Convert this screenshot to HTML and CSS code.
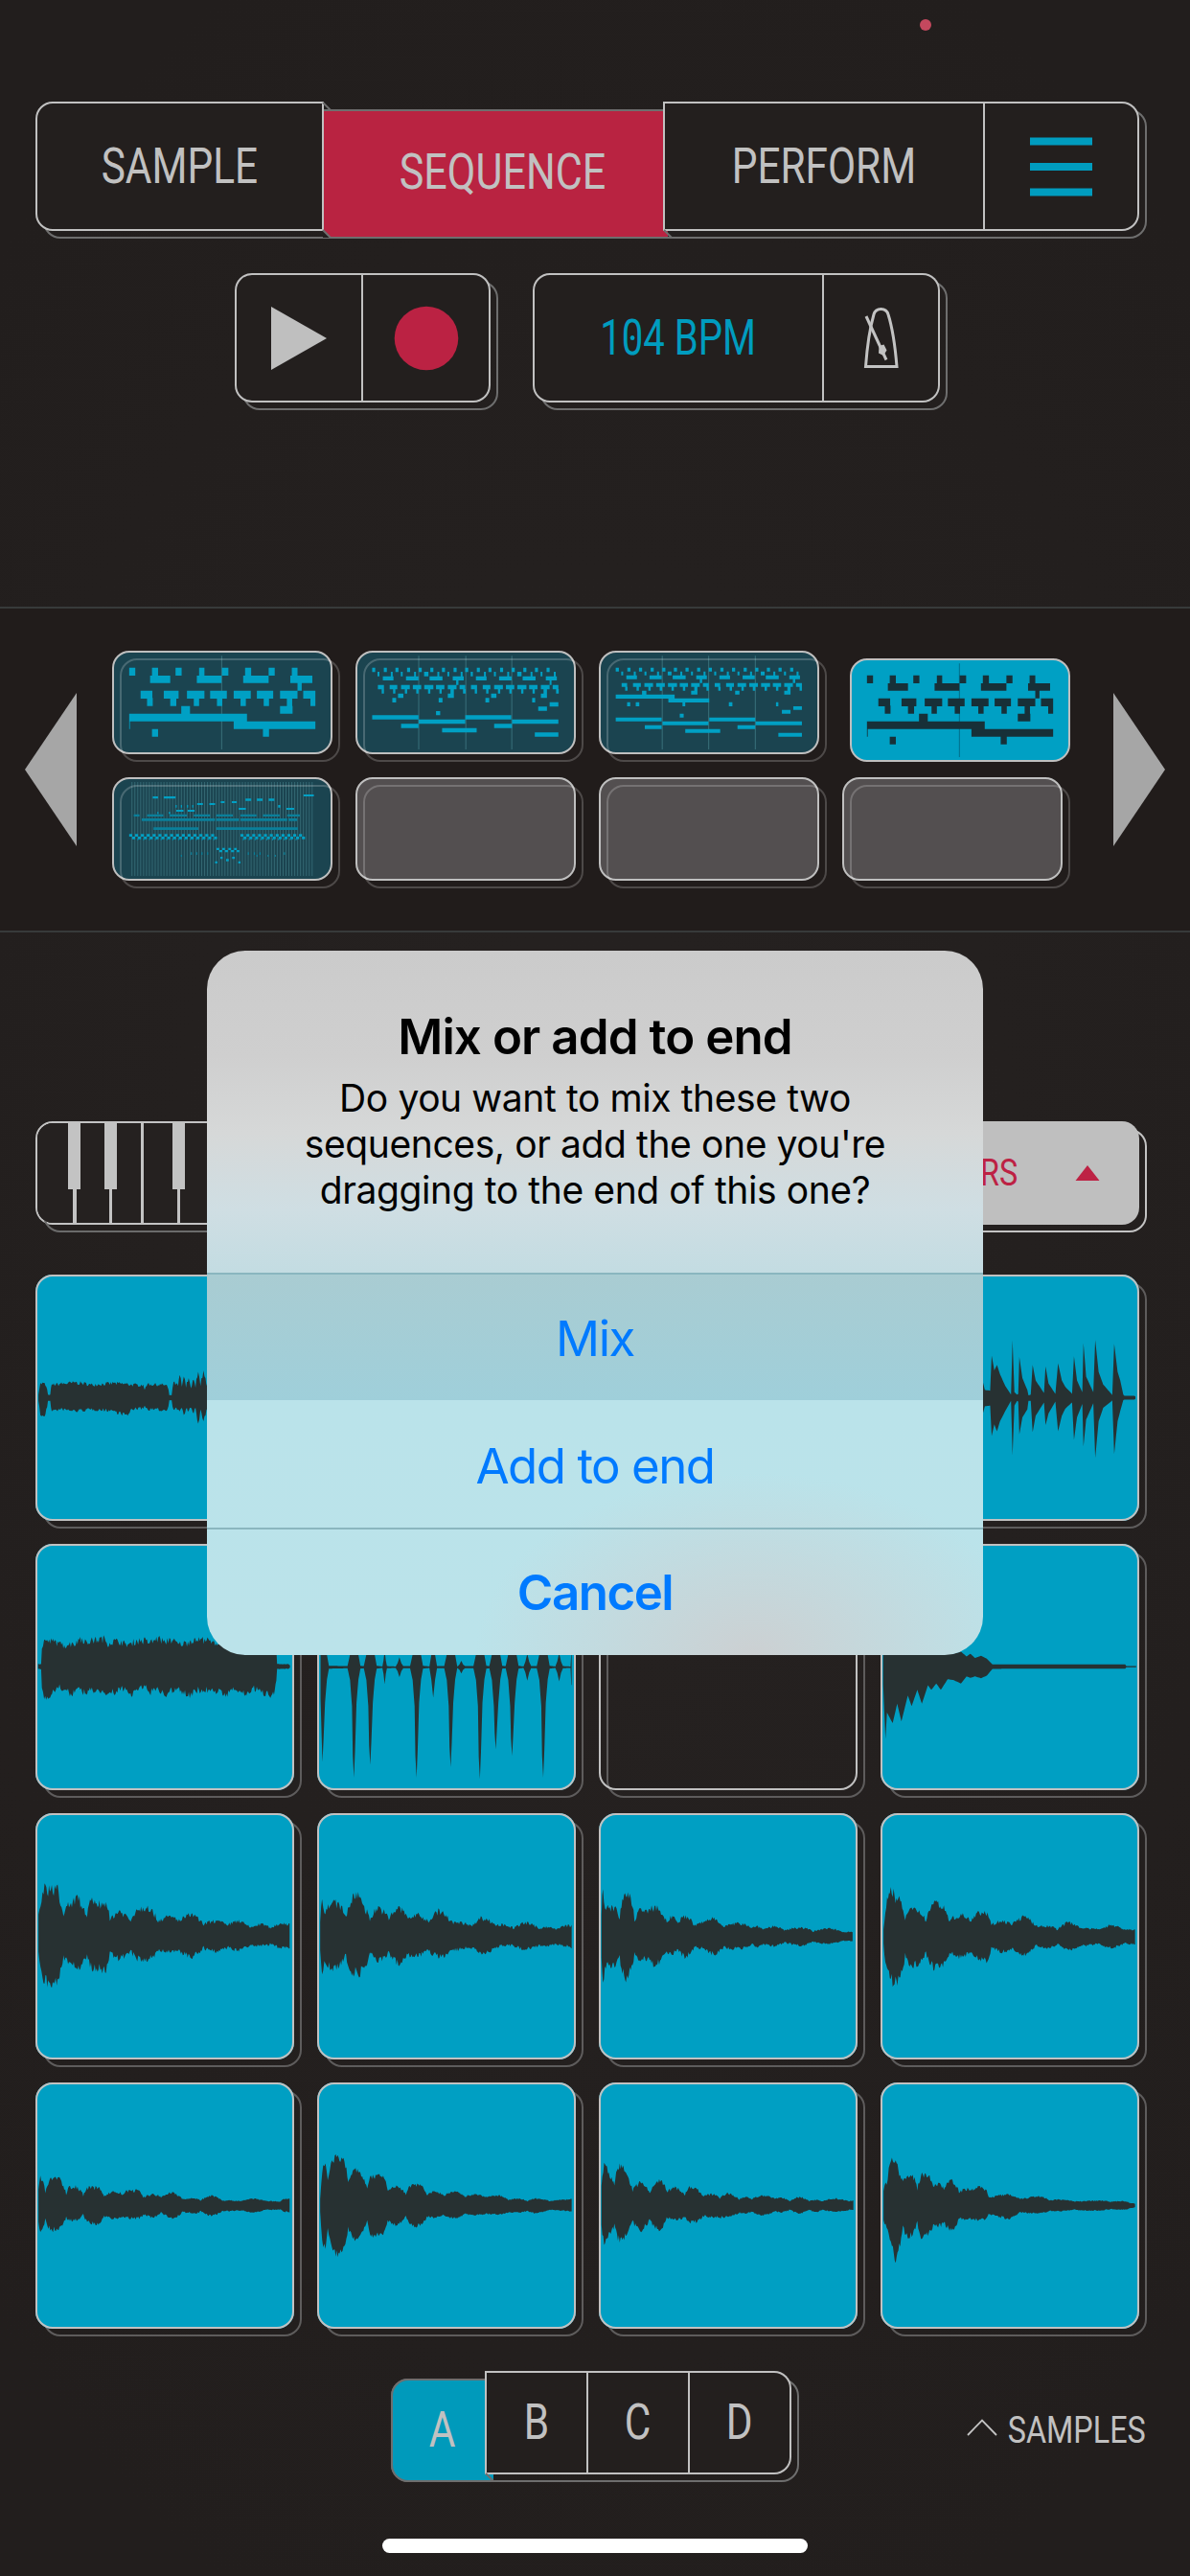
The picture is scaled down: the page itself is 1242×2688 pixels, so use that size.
FILE: index.html
```html
<!DOCTYPE html>
<html lang="en">
<head>
<meta charset="utf-8">
<title>Sequencer</title>
<link rel="stylesheet" href="styles.css">
</head>
<body>
<main class="screen">
  <span class="mic-dot"></span>

  <nav class="bar tabs">
    <div class="cell tab-sample"><span class="label">SAMPLE</span></div>
    <div class="cell tab-sequence sunk"><span class="label">SEQUENCE</span></div>
    <div class="cell tab-perform"><span class="label">PERFORM</span></div>
    <div class="cell tab-menu">
      <svg width="65" height="62" viewBox="0 0 65 62"><path d="M0 4.500h65M0 31h65M0 57.500h65" stroke="#009cbf" stroke-width="8"/></svg>
    </div>
    <svg class="joints" width="380" height="150" viewBox="0 0 380 150"><path d="M300 1l8 8" /><path d="M300 134l8 8H300z" class="gap"/><path d="M300 134l8 8M656 134l8 8"/></svg>
  </nav>

  <section class="transport">
    <div class="bar">
      <div class="cell play"><svg width="60" height="68" viewBox="0 0 60 68"><path d="M1 1L59 34L1 67z" fill="#bfbfbf"/></svg></div>
      <div class="cell record"><svg width="68" height="68" viewBox="0 0 68 68"><circle cx="34" cy="34" r="33.300" fill="#bb2243"/></svg></div>
    </div>
    <div class="bar">
      <div class="cell bpm"><span class="label">1<span class="zero">0</span>4 BPM</span></div>
      <div class="cell metronome">
        <svg width="38" height="66" viewBox="0 0 38 66" fill="none" stroke="#c3c3c3" stroke-width="3">
          <path d="M2.500 62.500C4 42 7 22 11 8C13 0.500 24 0.500 26 8C31 24 33.500 44 35 62.500z"/>
          <path d="M3 10L24 55.500" /><path d="M16.500 41l5-1.500l3 6l-3.500 5.500l-5-2.500z" fill="#c3c3c3" stroke="none"/>
        </svg>
      </div>
    </div>
  </section>

  <section class="sequences">
    <svg class="arrow prev" width="54" height="160" viewBox="0 0 54 160"><path d="M54 0V160L0 80z"/></svg>
    <div class="slots">
      <div class="slot filled"><svg class="notes" data-notes="a" viewBox="296 177 580 324" preserveAspectRatio="none"></svg></div>
      <div class="slot filled"><svg class="notes" data-notes="b" viewBox="938 177 580 324" preserveAspectRatio="none"></svg></div>
      <div class="slot filled"><svg class="notes" data-notes="c" viewBox="62 177 561 324" preserveAspectRatio="none"></svg></div>
      <div class="slot selected"><svg class="notes" data-notes="a" viewBox="296 177 580 324" preserveAspectRatio="none"></svg></div>
      <div class="slot filled"><svg class="notes" data-notes="d" viewBox="296 573 580 324" preserveAspectRatio="none"></svg></div>
      <div class="slot"></div>
      <div class="slot"></div>
      <div class="slot"></div>
    </div>
    <svg class="arrow next" width="54" height="160" viewBox="0 0 54 160"><path d="M0 0V160L54 80z"/></svg>
  </section>

  <section class="modes">
    <div class="keyboard">
      <svg width="240" height="104" viewBox="0 0 240 104" fill="#c3c3c3">
        <path d="M32 0h13v69h-4v35h-4v-35h-5zM70 0h13v69h-5v35h-3v-35h-5zM108 0h3v104h-3zM141 0h13v69h-5v35h-3v-35h-5z"/>
      </svg>
    </div>
    <div class="filters">
      <span class="label small">RS</span>
      <svg width="26" height="16" viewBox="0 0 26 16"><path d="M13 0L25.500 16H0.500z" fill="#bd2244"/></svg>
    </div>
  </section>

  <section class="pads">
    <div class="pad"><svg class="wave" data-wave="r1c1" viewBox="94 905 682 630" preserveAspectRatio="none"></svg></div>
    <div class="pad"></div>
    <div class="pad"></div>
    <div class="pad"><svg class="wave" data-wave="r1c4" viewBox="753 905 682 630" preserveAspectRatio="none"></svg></div>
    <div class="pad"><svg class="wave" data-wave="r2c1" viewBox="94 57 682 695" preserveAspectRatio="none"></svg></div>
    <div class="pad"><svg class="wave" data-wave="r2c2" viewBox="836 57 682 695" preserveAspectRatio="none"></svg></div>
    <div class="pad empty"></div>
    <div class="pad"><svg class="wave" data-wave="r2c4" viewBox="753 57 682 695" preserveAspectRatio="none"></svg></div>
    <div class="pad"><svg class="wave" data-wave="r3c1" viewBox="94 816 682 695" preserveAspectRatio="none"></svg></div>
    <div class="pad"><svg class="wave" data-wave="r3c2" viewBox="836 816 682 695" preserveAspectRatio="none"></svg></div>
    <div class="pad"><svg class="wave" data-wave="r3c3" viewBox="11 816 682 695" preserveAspectRatio="none"></svg></div>
    <div class="pad"><svg class="wave" data-wave="r3c4" viewBox="753 816 682 695" preserveAspectRatio="none"></svg></div>
    <div class="pad"><svg class="wave" data-wave="r4c1" viewBox="94 39 682 763" preserveAspectRatio="none"></svg></div>
    <div class="pad"><svg class="wave" data-wave="r4c2" viewBox="836 39 682 763" preserveAspectRatio="none"></svg></div>
    <div class="pad"><svg class="wave" data-wave="r4c3" viewBox="11 39 682 763" preserveAspectRatio="none"></svg></div>
    <div class="pad"><svg class="wave" data-wave="r4c4" viewBox="753 39 682 763" preserveAspectRatio="none"></svg></div>
  </section>

  <footer class="footer">
    <div class="bar banks">
      <div class="cell bank-a sunk"><span class="label">A</span></div>
      <div class="cell bank-b"><span class="label">B</span></div>
      <div class="cell bank"><span class="label">C</span></div>
      <div class="cell bank"><span class="label">D</span></div>
      <svg class="joints" width="130" height="120" viewBox="0 0 130 120"><path d="M107 107l8 8"/></svg>
    </div>
    <div class="samples">
      <svg width="32" height="18" viewBox="0 0 32 18"><path d="M1 17L16 1.500L31 17" fill="none" stroke="#c3c3c3" stroke-width="1.800"/></svg>
      <span class="label small">SAMPLES</span>
    </div>
  </footer>
  <div class="home-bar"></div>

  <div class="alert">
    <div class="alert-text">
      <h1>Mix or add to end</h1>
      <p>Do you want to mix these two<br>sequences, or add the one you're<br>dragging to the end of this one?</p>
    </div>
    <div class="action pressed"><span>Mix</span></div>
    <div class="action"><span>Add to end</span></div>
    <div class="action cancel"><span>Cancel</span></div>
  </div>
</main>
<script src="script.js"></script>
</body>
</html>
```
FILE: styles.css
```css
* { box-sizing: border-box; }

body {
  margin: 0;
  background: #231f1e;
  font-family: Roboto, "Liberation Sans", sans-serif;
}

svg { display: block; }

.screen {
  position: relative;
  width: 1242px;
  height: 2688px;
  padding-top: 106px;
  overflow: hidden;
  display: flex;
  flex-direction: column;
  background: radial-gradient(ellipse 900px 1500px at 50% 50%, #262221, #221e1d);
}

.mic-dot {
  position: absolute;
  left: 960px;
  top: 20px;
  width: 12px;
  height: 12px;
  border-radius: 50%;
  background: #c4485e;
}

.label {
  display: block;
  font-size: 51px;
  line-height: 60px;
  color: #c1c1c1;
  white-space: nowrap;
  transform: scaleX(.83);
}

.label.small { font-size: 39px; line-height: 46px; }

/* Outlined groups with an offset second outline behind */
.bar {
  position: relative;
  isolation: isolate;
  display: flex;
  height: 135px;
}

.bar::before {
  content: "";
  position: absolute;
  z-index: -1;
  inset: 8px -8px -8px 8px;
  border: 2px solid #6e6e6e;
  border-radius: 18px;
}

.cell {
  display: flex;
  align-items: center;
  justify-content: center;
  height: 100%;
  background: #231f1e;
  border: 2px solid #c1c1c1;
  border-left: 0;
}

.cell:first-child { border-left: 2px solid #c1c1c1; border-radius: 18px 0 0 18px; }
.cell:nth-last-child(1 of .cell) { border-radius: 0 18px 18px 0; }

.joints {
  position: absolute;
  left: 0;
  top: 0;
  overflow: visible;
  fill: none;
  stroke: #6e6e6e;
  stroke-width: 2;
}

.joints .gap { fill: #231f1e; stroke: none; }

.tabs { width: 1152px; margin-left: 37px; }
.tab-sample { width: 301px; }
.tab-sequence { width: 354px; }
.tab-perform { width: 336px; border-left: 2px solid #c1c1c1; }
.tab-menu { width: 161px; }

.cell.sunk { position: relative; z-index: -1; margin-top: 8px; }
.cell.tab-sequence {
  margin-right: -5px;
  width: 359px;
  padding: 0 0 4px 13px;
  background: #b92341;
  border-color: #6e6e6e;
  border-width: 2px 0;
}
.tab-sequence .label { transform: scaleX(.845); }

.transport { display: flex; gap: 44px; margin: 44px 0 0 245px; }
.play { width: 134px; }
.record { width: 133px; }
.bpm { width: 304px; }
.bpm .label { color: #009cbf; transform: scaleX(.785); }
.zero { position: relative; }
.zero::after {
  content: "";
  position: absolute;
  left: 50%;
  top: 50%;
  width: 6px;
  height: 5px;
  margin: -2px 0 0 -3px;
  border-radius: 50%;
  background: #009cbf;
}
.metronome { width: 121px; padding-left: 1px; }

.sequences {
  display: flex;
  align-items: flex-start;
  height: 340px;
  margin-top: 213px;
  padding: 44px 26px 0;
  border: solid #373a3a;
  border-width: 2px 0;
  background: #211c1b;
}

.arrow { margin-top: 44px; fill: #a6a6a6; }
.prev { margin-right: 37px; }
.next { margin-left: 53px; }

.slots {
  display: grid;
  grid-template-columns: repeat(4, 230px);
  grid-auto-rows: 108px;
  gap: 24px;
}

.slot {
  position: relative;
  border: 2px solid #bfbfbf;
  border-radius: 18px;
  background: #534f50;
}

.slot::after {
  content: "";
  position: absolute;
  inset: 6px -10px -10px 6px;
  border: 2px solid rgba(255, 255, 255, .2);
  border-radius: 18px;
}

.filled { background: #1b4450; }
.selected { background: #00a0c4; margin: 8px -8px -8px 8px; }
.selected::after { display: none; }

.notes { width: 230px; height: 108px; margin: -2px; fill: #00a0c4; }
.selected .notes { fill: #173038; }
.notes .grid { fill: rgba(120, 200, 210, .28); }
.selected .notes .grid { fill: rgba(0, 40, 60, .35); }
.notes .soft { fill: #0a7f9a; }

.modes { display: flex; height: 108px; margin: 197px 53px 0 37px; }

.keyboard, .filters { position: relative; isolation: isolate; width: 576px; }
.keyboard {
  border: 2px solid #c3c3c3;
  border-radius: 18px 0 0 18px;
}
.keyboard::before, .filters::before {
  content: "";
  position: absolute;
  z-index: -1;
  inset: 8px -8px -8px 8px;
  border: 2px solid #c3c3c3;
  border-radius: 18px;
}
.keyboard::before { inset: 6px 0 -10px 6px; border-color: #6b6b6b; z-index: -2; }
.keyboard::after {
  content: "";
  position: absolute;
  inset: 0;
  z-index: -1;
  border-radius: 16px;
  background: #252120;
}

.filters {
  display: flex;
  align-items: center;
  justify-content: flex-end;
  padding-right: 41px;
}
.filters::after {
  content: "";
  position: absolute;
  inset: 0;
  z-index: -1;
  border-radius: 0 18px 18px 0;
  background: #bfbfbf;
}
.filters .label { color: #bd2244; margin-right: 56px; }

.pads {
  display: grid;
  grid-template-columns: repeat(4, 270px);
  grid-auto-rows: 257px;
  gap: 24px;
  margin: 52px 0 0 37px;
}

.pad { position: relative; }
.pad::before {
  content: "";
  position: absolute;
  inset: 8px -8px -8px 8px;
  border: 2px solid #5e5c5c;
  border-radius: 18px;
}
.pad::after {
  content: "";
  position: absolute;
  inset: 0;
  border: 2px solid #c1c1c1;
  border-radius: 18px;
}
.wave {
  position: relative;
  width: 270px;
  height: 257px;
  border-radius: 18px;
  background: #009fc3;
  fill: #273132;
}

.footer { position: relative; display: flex; justify-content: space-between; height: 108px; margin: 44px 45px 0 400px; }
.banks { height: 108px; width: 426px; }
.cell.bank-a {
  width: 107px;
  margin: 8px -9px 0 8px;
  padding-right: 1px;
  border: 2px solid #6e6e6e;
  border-right: 0;
  background: #009abb;
}
.bank-b { width: 108px; border-left: 2px solid #c1c1c1; }
.bank { width: 106px; }

.samples { display: flex; align-items: center; padding-top: 16px; }
.samples svg { margin: -6px -3px 0 3px; }
.samples .label { margin: 0 -14px 0 -1px; }

.home-bar { width: 444px; height: 15px; margin: 67px 0 0 399px; border-radius: 8px; background: #fff; }

/* Alert laid over the screen */
.alert {
  position: absolute;
  left: 216px;
  top: 992px;
  width: 810px;
  height: 735px;
  overflow: hidden;
  border-radius: 40px;
  font-family: Inter, "Liberation Sans", sans-serif;
  text-align: center;
  color: #000;
  background:
    radial-gradient(ellipse 290px 190px at 570px 735px, rgba(204, 208, 210, 1), rgba(190, 224, 230, 0)),
    linear-gradient(#cbcbcb, #cfcfcf 110px, #d6d8d8 190px, #cfdee3 270px, #c3dce2 336px, #bae3ea 470px, #bbe3ea);
}

.alert-text { height: 336px; padding-top: 59px; }
.alert h1 { margin: 0; font-size: 51px; line-height: 62px; font-weight: 600; letter-spacing: -.9px; }
.alert p { margin: 9px 0 0; font-size: 39px; line-height: 48px; letter-spacing: -.4px; }

.action {
  height: 133px;
  border-top: 2px solid #8ab6bf;
  font-size: 51px;
  line-height: 133px;
  letter-spacing: -1.5px;
  color: #007aff;
}
.action.pressed { background: linear-gradient(#a9ccd2, #9fcfda); }
.action.pressed + .action { border-top-color: transparent; }
.cancel { font-weight: 600; line-height: 132px; }
```
FILE: script.js
```js
// Piano-roll thumbnails: rows of [top, height, from, to, from, to, ...]
const repeat = (start, step, count, width) => {
  const out = [];
  for (let i = 0; i < count; i++) out.push(start + i * step, start + i * step + width);
  return out;
};

const shift = (list, by) => list.concat(list.map(v => v + by));

const noteSets = {
  a: {
    grid: [[193, 293, 583, 586]],
    notes: [
      [230, 25, 341, 357, 401, 417, 463, 479, 525, 539, 585, 602, 646, 662, 708, 724, 769, 784],
      [255, 23, 396, 449, 519, 584, 641, 708, 765, 823],
      [278, 24, 784, 795],
      [302, 25, 371, 402, 432, 471, 493, 539, 554, 598, 616, 661, 677, 720, 738, 784, 799, 831],
      [325, 25, 388, 403, 449, 465, 511, 525, 572, 586, 634, 648, 695, 709, 756, 770, 818, 831],
      [350, 24, 478, 501, 738, 771],
      [374, 24, 341, 651],
      [398, 24, 616, 831, 341, 343],
      [422, 24, 401, 417, 693, 709]
    ]
  },
  b: {
    grid: [[193, 293, 1103, 1106, 1227, 1230, 1348, 1351]],
    notes: [
      [230, 14, ...repeat(982, 30.6, 16, 8)],
      [243, 14, ...repeat(996, 61.3, 8, 5), ...repeat(1031, 61.3, 8, 5), 1119, 1130, 1242, 1247, 1364, 1375],
      [257, 13, ...shift([1010, 1038, 1071, 1104, 1133, 1167, 1194, 1223], 245)],
      [270, 14, 1203, 1209, 1449, 1454],
      [284, 14, ...shift([997, 1013, 1028, 1048, 1058, 1081, 1089, 1111, 1119, 1143, 1150, 1172, 1181, 1204, 1212, 1227], 245)],
      [297, 14, ...shift([1007, 1013, 1037, 1043, 1068, 1074, 1098, 1104, 1129, 1135, 1159, 1165, 1188, 1197, 1221, 1228], 245)],
      [311, 14, ...shift([1050, 1064, 1181, 1197], 245)],
      [325, 14, 1035, 1045, 1157, 1167, 1280, 1290, 1403, 1411],
      [338, 14, 1449, 1472], [352, 13, 1419, 1442], [366, 13, 1150, 1161],
      [379, 13, 982, 1104, 1227, 1348], [392, 14, 1104, 1227, 1350, 1472],
      [406, 13, 1058, 1104, 1303, 1350], [419, 14, 1166, 1257], [433, 13, 1410, 1472]
    ]
  },
  c: {
    grid: [[193, 293, 222, 225, 340, 343, 459, 462]],
    notes: [
      [230, 12, ...repeat(105, 29.6, 16, 8)],
      [242, 12, ...repeat(119, 59.2, 8, 5), ...repeat(151, 59.2, 8, 5), 238, 247, 475, 484],
      [254, 12, ...shift([132, 159, 191, 222, 250, 283, 310, 337], 237)],
      [266, 12, 319, 325, 556, 562],
      [278, 12, ...shift([120, 134, 149, 169, 178, 200, 208, 230, 238, 261, 268, 289, 297, 319, 327, 342], 237)],
      [290, 12, ...shift([129, 135, 158, 164, 188, 194, 217, 223, 247, 253, 276, 282, 305, 313, 336, 342], 237)],
      [302, 12, 172, 183, 297, 313, 409, 420, 534, 550],
      [314, 13, 105, 255], [326, 13, 239, 343],
      [338, 13, 134, 142, 156, 165, 275, 282, 393, 402, 513, 519],
      [351, 11, 557, 579], [362, 12, 528, 550], [374, 12, 268, 278],
      [386, 12, 105, 222, 343, 460], [398, 12, 224, 341, 461, 579],
      [410, 12, 179, 222, 415, 460], [422, 12, 282, 371], [434, 12, 519, 579]
    ]
  },
  d: {
    grid: [[588, 294, ...repeat(347, 7.65, 63, 2.500)]],
    soft: [
      [689, 7, 353, 368, 388, 431, 447, 493, 511, 554, 570, 614, 634, 676, 693, 737, 757, 790],
      [702, 8, 374, 567, 570, 630, 634, 757, 760, 783],
      [730, 8, 405, 523, 570, 785],
      [765, 6, ...repeat(362, 15.4, 14, 3), ...repeat(640, 15.4, 10, 3)],
      [808, 8, 503, 506, 517, 520, 531, 534, 546, 549, 653, 656, 669, 672, 684, 687, 748, 751],
      [816, 6, 477, 480, 676, 679, 705, 708, 724, 727]
    ],
    notes: [
      [633, 7, 403, 417, 432, 463], [654, 6, 520, 535, 552, 567], [675, 6, 465, 484, 495, 513],
      [648, 6, 582, 592, 611, 624], [640, 7, 647, 662, 677, 692, 708, 723],
      [669, 6, 629, 648, 755, 775], [627, 6, 800, 827],
      [660, 8, 463, 466, 477, 480, 493, 496, 507, 510, 733, 739],
      [682, 6, 415, 418, 445, 449],
      [751, 8, ...repeat(341, 15.4, 15, 8), ...repeat(634, 15.4, 11, 8)],
      [759, 8, ...repeat(348.700, 15.4, 15, 8), ...repeat(641.700, 15.4, 11, 8)],
      [794, 7, 571, 578, 586, 593, 602, 609, 617, 624],
      [801, 7, 578, 586, 593, 601, 609, 617, 624, 631],
      [822, 7, 581, 587, 612, 619], [829, 7, 596, 603], [836, 7, 567, 573, 628, 634]
    ]
  }
};

const rowsToPath = rows => rows.map(([y, h, ...xs]) => {
  let d = "";
  for (let i = 0; i < xs.length; i += 2) d += `M${xs[i]} ${y}H${xs[i + 1]}v${h}H${xs[i]}z`;
  return d;
}).join("");

const addPath = (svg, d, cls) => {
  const path = document.createElementNS("http://www.w3.org/2000/svg", "path");
  path.setAttribute("d", d);
  if (cls) path.setAttribute("class", cls);
  svg.appendChild(path);
};

document.querySelectorAll(".notes").forEach(svg => {
  const set = noteSets[svg.dataset.notes];
  addPath(svg, rowsToPath(set.grid), "grid");
  if (set.soft) addPath(svg, rowsToPath(set.soft), "soft");
  addPath(svg, rowsToPath(set.notes));
});

// Waveforms: "x,above,below" envelope points around a centre line
const spikes = [[850, 268], [933, 312], [976, 276], [1014, 48], [1053, 28], [1098, 312], [1142, 86], [1188, 282], [1216, 18],
  [1265, 316], [1307, 232], [1350, 250], [1390, 38], [1432, 312], [1474, 40], [1507, 52]]
  .map(([x, d]) => {
    const w = d > 100 ? 17 : d > 40 && d < 60 ? 6 : 10;
    if (x === 1507) return "1504,2,2 1506,40,50 1507,40,50";
    if (d <= 100) return `${x - w},2,2 ${x - w / 2},${d * .4},${d * .4} ${x},${d},${d} ${x + w / 2},${d * .4},${d * .4} ${x + w},3,3`;
    const open = x === 850 ? "845,90,90 848,200,200" : `${x - w},3,3 ${x - w * .6},36,36 ${x - w * .3},110,110 ${x - 3},${d * .8},${d * .8}`;
    return `${open} ${x},${d},${d} ${x + 3},${d * .75},${d * .75} ${x + w * .4},100,100 ${x + w * .7},34,34 ${x + w},4,4`;
  }).join(" ");

const waves = {
  r1c1: [1220, .12, "102,8,8 104,20,20 107,38,45 118,38,48 127,8,8 133,8,8 137,35,35 160,36,30 200,40,35 240,34,30 300,38,34 337,36,46 345,34,30 378,34,28 382,20,20 390,36,30 440,33,33 447,6,6 453,6,6 458,40,30 470,30,30 474,58,35 480,28,26 485,54,44 491,26,28 498,50,34 504,24,26 511,46,40 516,26,26 523,66,66 529,30,30 537,70,60 545,30,30 560,60,50"],
  r1c4: [1220, .05, "1000,30,30 1023,40,40 1028,20,22 1042,18,20 1046,108,98 1053,70,68 1060,84,86 1068,60,60 1082,30,34 1097,8,8 1101,148,148 1106,14,20 1113,8,8 1116,10,10 1119,104,94 1127,50,50 1140,20,30 1143,6,8 1149,8,8 1154,84,88 1162,44,46 1184,12,12 1188,80,70 1196,36,40 1214,10,10 1221,88,86 1231,44,46 1240,28,28 1258,10,12 1263,106,108 1271,44,50 1285,14,16 1288,140,125 1295,54,56 1314,14,14 1319,148,154 1328,66,60 1340,34,26 1364,7,7 1369,138,144 1378,66,60 1385,44,34 1393,8,6 1396,5,5 1422,5,5 1425,3,3"],
  r2c1: [403, .13, "101,7,6 109,7,8 111,50,60 117,76,92 125,75,85 148,72,66 155,66,60 170,60,66 192,68,84 200,60,65 212,84,66 230,68,80 240,74,68 276,82,74 282,66,80 310,76,74 330,66,58 347,66,86 360,76,64 388,76,64 395,66,76 418,82,64 436,68,84 447,80,72 470,64,62 496,70,84 515,80,68 540,78,72 560,70,62 590,70,82 620,70,66 650,70,82 665,70,60 690,72,74 716,72,82 725,70,66 729,50,40 731,7,7 760,7,7 765,3,3"],
  r2c2: [405, .04, spikes],
  r2c4: [403, .04, "760,50,50 766,205,205 770,130,130 785,140,160 797,105,105 808,140,155 825,85,82 835,100,112 850,70,66 862,90,105 878,55,53 887,60,66 900,50,48 912,60,66 930,40,36 945,36,38 965,42,48 980,28,28 990,36,32 1002,24,28 1018,30,33 1033,22,26 1048,6,7 1100,6,6 1398,6,6 1401,1,2 1427,1,2"],
  r3c1: [1162, .13, "102,60,45 110,95,100 118,148,135 132,125,132 150,142,140 160,85,90 168,55,55 180,95,80 190,80,80 205,115,95 215,85,80 230,52,52 243,108,98 255,92,92 280,95,105 290,42,45 315,72,68 345,40,40 360,75,65 390,85,72 415,42,42 450,56,48 475,42,42 505,62,64 535,32,32 570,44,48 600,28,32 625,44,44 660,22,26 690,34,30 715,20,24 740,36,34 764,34,35"],
  r3c2: [1163, .13, "844,40,40 849,104,108 855,65,70 865,90,90 892,97,92 912,55,50 925,95,100 944,125,110 960,85,90 975,42,46 997,85,75 1025,45,42 1050,84,82 1075,50,52 1100,62,58 1130,38,42 1158,75,62 1185,42,42 1225,36,36 1250,32,32 1270,54,52 1305,32,32 1330,34,28 1355,20,28 1385,40,38 1420,20,24 1440,28,30 1465,18,22 1500,32,30 1507,32,35"],
  r3c3: [1164, .12, "18,60,60 22,134,130 27,80,85 55,85,85 66,48,52 80,122,122 95,110,95 105,42,44 120,80,70 140,65,60 160,88,85 180,60,52 190,40,42 205,58,52 220,38,36 240,60,60 262,30,30 290,42,35 315,54,52 340,26,28 360,35,35 390,38,35 415,24,20 430,30,32 445,20,20 475,30,28 500,16,16 545,27,27 575,13,14 620,24,22 650,14,13 680,12,13"],
  r3c4: [1164, .12, "761,20,20 768,80,80 780,140,120 790,115,135 805,100,115 818,46,46 830,78,85 855,74,75 873,42,42 895,102,95 925,72,70 935,42,46 965,64,60 990,42,46 1010,72,65 1035,68,70 1045,32,30 1075,46,45 1100,32,32 1130,58,54 1160,30,26 1200,30,33 1220,18,20 1250,42,38 1280,24,28 1330,20,20 1360,33,33 1395,20,20 1424,20,22"],
  r4c1: [420, .1, "102,50,50 107,92,82 120,38,40 133,85,78 155,88,76 175,32,34 185,60,48 205,58,46 220,28,26 230,56,50 260,56,60 275,28,32 300,44,42 325,34,34 340,48,40 368,46,42 378,24,28 405,36,38 425,24,20 455,42,42 480,20,20 520,22,25 530,14,16 558,32,34 585,16,18 640,14,16 665,22,22 700,14,14 740,12,12 750,20,20 764,22,22"],
  r4c2: [420, .08, "844,20,20 852,125,130 858,130,135 864,78,70 875,140,130 890,156,160 908,135,125 918,72,66 935,112,110 955,90,80 968,52,46 978,92,96 1010,92,92 1022,46,46 1045,62,62 1070,32,32 1080,60,58 1095,66,66 1115,58,55 1125,32,34 1145,44,38 1170,30,30 1200,44,40 1225,26,26 1250,35,30 1280,26,26 1315,32,28 1340,16,22 1370,22,22 1390,12,16 1410,22,24 1450,13,13 1507,20,18"],
  r4c3: [420, .1, "18,60,60 25,132,122 35,100,100 52,62,56 66,130,115 85,95,90 100,42,46 120,74,80 145,38,42 170,82,80 190,44,36 215,56,46 238,30,36 250,60,52 270,50,52 285,30,32 315,36,38 330,20,38 350,40,35 380,17,24 400,28,25 415,18,20 440,32,32 475,20,18 490,25,22 515,13,13 540,27,25 565,13,13 585,18,20 600,13,13 635,22,20 670,12,14 682,16,14"],
  r4c4: [420, .1, "761,45,45 772,80,75 783,148,125 793,140,178 800,110,140 812,75,62 825,92,102 838,95,90 850,46,48 862,102,104 880,92,86 892,58,58 905,70,68 920,48,52 940,82,78 960,38,40 975,52,46 1000,50,42 1010,60,48 1030,50,42 1038,26,26 1060,30,32 1090,35,42 1120,20,20 1145,25,25 1170,30,25 1195,18,18 1225,18,18 1260,13,13 1300,14,16 1330,16,16 1360,11,11 1390,14,14 1410,8,9 1424,5,5"]
};

let seed = 7;
const random = () => (seed = (seed * 16807) % 2147483647) / 2147483647;

// Lobes stay rounded between envelope points; roughness adds the fine teeth
const ease = (a, b, t) => a + (b - a) * (b > a ? Math.pow(t, .6) : 1 - Math.pow(1 - t, .6));

document.querySelectorAll(".wave").forEach(svg => {
  const [cy, rough, text] = waves[svg.dataset.wave];
  const pts = text.trim().split(/\s+/).map(p => p.split(",").map(Number));
  const lobed = rough >= .08;
  const mix = lobed ? ease : (a, b, t) => a + (b - a) * t;
  const top = [], bottom = [];
  const push = (x, up, down) => {
    top.push(`${x.toFixed(1)} ${(cy - up).toFixed(1)}`);
    bottom.unshift(`${x.toFixed(1)} ${(cy + down).toFixed(1)}`);
  };
  for (let i = 0; i < pts.length - 1; i++) {
    const [x0, u0, d0] = pts[i], [x1, u1, d1] = pts[i + 1];
    const n = Math.max(1, Math.round((x1 - x0) / 2.500));
    for (let k = 0; k < n; k++) {
      const t = k / n;
      const j = k && lobed ? rough * 1.5 : 0;
      push(x0 + (x1 - x0) * t,
        mix(u0, u1, t) * (1 - j + random() * j * 1.5),
        mix(d0, d1, t) * (1 - j + random() * j * 1.5));
    }
  }
  push(...pts[pts.length - 1]);
  addPath(svg, "M" + top.concat(bottom).join("L") + "z");
});
```
